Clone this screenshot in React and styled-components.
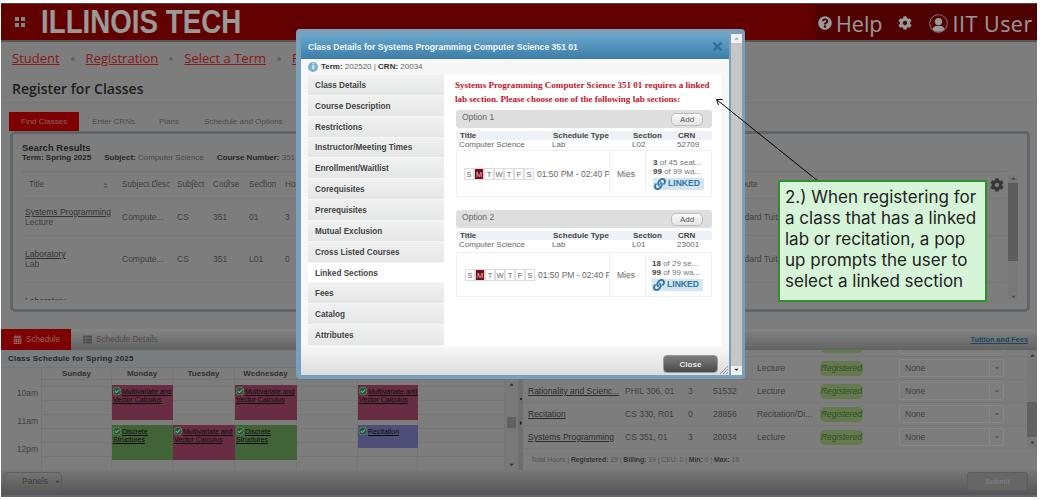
import React from 'react'
import styled, { createGlobalStyle } from 'styled-components'
import { FaQuestionCircle, FaCog, FaLink, FaCalendarAlt, FaThList, FaTimes, FaCheckCircle, FaCaretDown, FaCaretUp, FaCaretRight, FaSort } from 'react-icons/fa'

const Global = createGlobalStyle`
  html, body { margin: 0; background: #fff; overflow: hidden; }
  body { font-family: "Liberation Sans", Arial, sans-serif; }
`

/* Page under the dimmer: colours are lighter than they look, the veil darkens them */
const Screen = styled.div`
  position: relative;
  width: 1036px;
  height: 494px;
  margin: 3px 3px 3px 1px;
  display: flex;
  flex-direction: column;
  background: #d1d1d1;
  overflow: hidden;
`
const Veil = styled.div`
  position: absolute;
  inset: 0;
  background: rgba(0, 0, 0, 0.4);
`

const Header = styled.header`
  flex: none;
  height: 36px;
  display: flex;
  align-items: center;
  background: #a40000;
  border-bottom: 2px solid #8e8e8e;
  border-top: 1px solid #777;
`
const Grip = styled.div`
  display: grid;
  grid-template-columns: 4px 4px;
  gap: 2px;
  margin: 0 16px 0 14px;
  span { width: 4px; height: 4px; background: #ddd; }
`
const Logo = styled.div`
  font-weight: 700;
  font-size: 33px;
  line-height: 36px;
  color: #fff;
  flex: 1;
  white-space: nowrap;
  transform: scaleX(0.84);
  transform-origin: left center;
`
const HeaderRight = styled.div`
  width: 222px;
  height: 100%;
  display: flex;
  align-items: center;
  background: #840000;
  padding: 2px 0 0 3px;
  box-sizing: border-box;
  color: #fff;
  font-family: "Open Sans", sans-serif;
  font-size: 21.5px;
  white-space: nowrap;
`
const HelpText = styled.span`
  margin: 0 15px 0 4px;
`
const UserName = styled.span`
  letter-spacing: 0.5px;
`
const UserIcon = styled.svg`
  width: 19px;
  height: 19px;
  margin: 0 5px 0 17px;
`

const Crumbs = styled.nav`
  flex: none;
  height: 30px;
  display: flex;
  align-items: center;
  padding: 2px 0 0 11px;
  box-sizing: border-box;
  font-family: "Open Sans", sans-serif;
  font-size: 13px;
  white-space: nowrap;
  a { color: #e62a2a; text-decoration: underline; }
`
const CrumbDot = styled.i`
  width: 4px;
  height: 4px;
  border-radius: 50%;
  background: #a5a5a5;
  margin: 2px 11px 0 11px;
`
const PageTitle = styled.h1`
  flex: none;
  height: 31px;
  margin: 0;
  padding-left: 11px;
  font-family: "Open Sans", sans-serif;
  font-size: 14px;
  font-weight: 600;
  line-height: 33px;
  color: #333;
  border-bottom: 1px solid #c4c4c4;
  box-sizing: border-box;
`
const TabRow = styled.div`
  flex: none;
  height: 19px;
  margin-top: 9px;
  padding-left: 8px;
  display: flex;
  font-size: 8px;
  color: #7d7d7d;
`
const Tab = styled.div`
  height: 19px;
  line-height: 20px;
  padding: 0 12px;
  background: ${p => (p.$active ? '#d20000' : 'transparent')};
  color: ${p => (p.$active ? '#e9a0a0' : 'inherit')};
  margin-left: ${p => p.$gap || 0}px;
`

const Panel = styled.section`
  flex: none;
  width: 1020px;
  height: 181px;
  margin-left: 9px;
  border: 3px solid #a0a9b0;
  border-radius: 5px;
  padding: 8px 0 0 9px;
  box-sizing: border-box;
  position: relative;
`
const PanelTitle = styled.div`
  font-size: 9.5px;
  font-weight: 700;
  line-height: 11px;
  color: #3a3a3a;
`
const SearchInfo = styled.div`
  font-size: 8px;
  line-height: 10px;
  color: #7a7a7a;
  white-space: nowrap;
  b { color: #3f3f3f; }
  span { margin-right: 13px; }
`
const ResultTable = styled.div`
  margin-top: 8px;
  width: 985px;
  height: 128px;
  overflow: hidden;
  border-top: 1px solid #bdbdbd;
`
const ResultRow = styled.div`
  display: grid;
  grid-template-columns: 93px 55px 36px 36px 36px 442px 1fr;
  height: ${p => p.$h}px;
  border-bottom: 1px solid #c5c5c5;
  font-size: 8.5px;
  color: #6b6b6b;
`
const ResultCell = styled.div`
  display: flex;
  flex-direction: column;
  justify-content: center;
  padding-left: ${p => (p.$title ? 3 : 7)}px;
  line-height: 10px;
  white-space: nowrap;
  overflow: hidden;
  position: relative;
  a { color: #555; text-decoration: underline; }
`
const HeadCell = styled(ResultCell)`
  flex-direction: row;
  justify-content: flex-start;
  align-items: center;
  font-size: 8.2px;
  svg { color: #999; font-size: 7px; margin-left: ${p => p.$sortGap || 0}px; }
  &::after {
    content: '';
    display: ${p => (p.$caret ? 'block' : 'none')};
    position: absolute;
    left: ${p => p.$caret}px;
    top: 8px;
    width: 3px;
    height: 3px;
    border-left: 1px solid #999;
    border-top: 1px solid #999;
    transform: rotate(45deg);
  }
`
const ToolsCell = styled(HeadCell)`
  justify-content: space-between;
  padding-right: 3px;
  svg { color: #5c5c5c; font-size: 14px; margin: 0; }
`
const PanelScroll = styled.div`
  position: absolute;
  right: 9px;
  top: 41px;
  width: 10px;
  height: 125px;
  background: #c9c9c9;
  display: flex;
  flex-direction: column;
  align-items: center;
  justify-content: space-between;
  font-size: 7px;
  color: #777;
  &::before {
    content: '';
    position: absolute;
    top: 8px;
    left: 0;
    width: 10px;
    height: 78px;
    background: #9c9c9c;
  }
`

const Lower = styled.div`
  flex: none;
  margin-top: 17px;
  display: flex;
  flex-direction: column;
  height: 168px;
`
const LowerTabs = styled.div`
  flex: none;
  height: 21px;
  display: flex;
  align-items: stretch;
  background: linear-gradient(#dcdcdc, #a4a4a4);
  font-size: 8.2px;
  color: #808080;
`
const LowerTab = styled.div`
  display: flex;
  align-items: center;
  gap: 4px;
  width: ${p => (p.$active ? '70px' : 'auto')};
  box-sizing: border-box;
  padding: 0 12px;
  white-space: nowrap;
  background: ${p => (p.$active ? '#d20000' : 'transparent')};
  color: ${p => (p.$active ? '#f0a0a0' : 'inherit')};
  svg { font-size: 9px; flex: none; }
`
const FeesLink = styled.a`
  margin-left: auto;
  margin-right: 9px;
  align-self: center;
  font-size: 7.3px;
  font-weight: 700;
  color: #33789f;
  text-decoration: underline;
`
const LowerBody = styled.div`
  flex: none;
  height: 120px;
  display: flex;
  overflow: hidden;
`
const Calendar = styled.div`
  width: 517px;
  flex: none;
  display: flex;
  flex-direction: column;
`
const CalendarCaption = styled.div`
  flex: none;
  height: 17px;
  line-height: 17px;
  padding-left: 7px;
  font-size: 8px;
  font-weight: 700;
  color: #444;
  background: #c7d0d5;
  letter-spacing: 0.2px;
`
const CalendarGrid = styled.div`
  flex: 1;
  display: flex;
  position: relative;
  min-height: 0;
`
const TimeColumn = styled.div`
  width: 41px;
  flex: none;
  padding-top: 18px;
  border-right: 1px solid #c3c3c3;
  border-top: 1px solid #c3c3c3;
  box-sizing: border-box;
`
const TimeLabel = styled.div`
  height: 14px;
  line-height: 14px;
  margin-bottom: 14px;
  padding-right: 3px;
  font-size: 8.5px;
  text-align: right;
  color: #6e6e6e;
`
const DayColumn = styled.div`
  width: ${p => p.$w}px;
  flex: none;
  border-right: 1px solid #c3c3c3;
  box-sizing: border-box;
  display: flex;
  flex-direction: column;
`
const DayName = styled.div`
  flex: none;
  height: 11px;
  line-height: 11px;
  text-align: center;
  font-size: 8px;
  font-weight: 700;
  color: #555;
  border-top: 1px solid #c3c3c3;
`
const DayBody = styled.div`
  flex: 1;
  position: relative;
  border-top: 1px solid #c3c3c3;
  background: repeating-linear-gradient(transparent 0 13px, #c3c3c3 13px 14px) 0 -7px;
  background-size: 100% 14px;
`
const Event = styled.div`
  position: absolute;
  left: 0;
  right: -1px;
  top: ${p => p.$top}px;
  height: ${p => p.$h}px;
  background: ${p => p.$color};
  font-size: 7px;
  line-height: 7.5px;
  padding: 2px 0 2px 1px;
  box-sizing: border-box;
  color: #111;
  text-decoration: underline;
  svg { color: #2f9d57; background: #fff; border-radius: 50%; font-size: 8px; vertical-align: -1px; margin-right: 1px; }
`
const CalendarScroll = styled.div`
  width: 13px;
  flex: none;
  background: #c9c9c9;
  display: flex;
  flex-direction: column;
  align-items: center;
  justify-content: space-between;
  position: relative;
  font-size: 7px;
  color: #555;
  padding: 14px 0 2px;
  box-sizing: border-box;
  &::before {
    content: '';
    position: absolute;
    top: 50px;
    left: 2px;
    width: 9px;
    height: 11px;
    background: #a2a2a2;
  }
`
const Splitter = styled.div`
  width: 5px;
  flex: none;
  background: #b9b9b9;
  display: flex;
  flex-direction: column;
  align-items: center;
  font-size: 6px;
  color: #333;
  padding-top: 48px;
  gap: 20px;
  box-sizing: border-box;
`
const SplitDot = styled.i`
  width: 2px;
  height: 2px;
  background: #222;
  border-radius: 50%;
`
const Registered = styled.div`
  flex: 1;
  min-width: 0;
  display: flex;
  flex-direction: column;
  position: relative;
`
const RegList = styled.div`
  height: 99px;
  flex: none;
  overflow: hidden;
`
const RegRows = styled.div`
  margin-top: -16px;
`
const RegRow = styled.div`
  display: grid;
  grid-template-columns: 97px 63px 26px 44px 63px 79px 1fr;
  height: 23px;
  align-items: center;
  border-bottom: 1px solid #c6c6c6;
  box-sizing: border-box;
  font-size: 8.5px;
  color: #6a6a6a;
  margin-right: 10px;
  white-space: nowrap;
`
const RegCell = styled.div`
  padding-left: ${p => p.$pad ?? 4}px;
  a { color: #4d4d4d; text-decoration: underline; }
`
const Pill = styled.span`
  display: inline-block;
  width: 43px;
  height: 15px;
  line-height: 15px;
  text-align: center;
  border-radius: 5px;
  background: #a6cc84;
  color: #587f38;
  font-style: italic;
  font-size: 8.5px;
`
const SelectBox = styled.div`
  width: 105px;
  height: 18px;
  margin-left: 4px;
  display: flex;
  align-items: center;
  border: 1px solid #e2e2e2;
  border-radius: 2px;
  box-sizing: border-box;
  padding-left: 5px;
  font-size: 8.5px;
  color: #6a6a6a;
  span { flex: 1; }
  div {
    width: 13px;
    height: 100%;
    border-left: 1px solid #e2e2e2;
    display: flex;
    align-items: center;
    justify-content: center;
    font-size: 6px;
    color: #888;
  }
`
const Totals = styled.div`
  height: 21px;
  line-height: 21px;
  padding-left: 8px;
  font-size: 6.8px;
  color: #888;
  border-bottom: 1px solid #c6c6c6;
  b { color: #555; }
`
const RegScroll = styled(CalendarScroll)`
  position: absolute;
  top: 0;
  right: 0;
  width: 10px;
  height: 99px;
  padding: 2px 0 3px;
  &::before { top: 52px; left: 0; width: 10px; height: 35px; }
`
const BottomBar = styled.footer`
  flex: none;
  height: 27px;
  box-sizing: border-box;
  display: flex;
  align-items: center;
  justify-content: space-between;
  padding: 0 9px 3px 3px;
  background: linear-gradient(#c8c8c8, #8e8e8e);
  border-bottom: 2px solid #a5a5c5;
`
const PanelsButton = styled.button`
  width: 58px;
  height: 19px;
  display: flex;
  align-items: center;
  gap: 6px;
  padding: 0 0 0 17px;
  background: transparent;
  border: 1px solid #9b9b9b;
  border-radius: 4px;
  font: 8.5px "Liberation Sans", sans-serif;
  color: #666;
`
const SubmitButton = styled.button`
  width: 61px;
  height: 19px;
  background: #ababab;
  border: 1px solid #9a9a9a;
  border-radius: 3px;
  font: bold 7.5px "Liberation Sans", sans-serif;
  color: #cfcfcf;
`

/* dialog */
const Modal = styled.div`
  position: absolute;
  left: 295px;
  top: 26px;
  width: 449px;
  height: 350px;
  padding: 5px 3px 4px 5px;
  box-sizing: border-box;
  background: #7aa0bb;
  border-radius: 4px;
  display: flex;
  gap: 2px;
`
const ModalMain = styled.div`
  flex: 1;
  display: flex;
  flex-direction: column;
  min-width: 0;
  background: #f7f7f7;
`
const ModalTitle = styled.div`
  height: 25px;
  flex: none;
  display: flex;
  align-items: center;
  justify-content: space-between;
  padding: 0 5px 0 7px;
  background: linear-gradient(#6aa6cd, #3c7ea9);
  color: #f2f6f9;
  font-size: 8.6px;
  font-weight: 700;
  svg { color: #2f6f9c; font-size: 13px; }
`
const TermRow = styled.div`
  height: 16px;
  flex: none;
  display: flex;
  align-items: center;
  padding: 0 0 1px 7px;
  box-sizing: border-box;
  gap: 3px;
  font-size: 8px;
  color: #666;
  b { color: #333; }
`
const InfoIcon = styled.span`
  width: 10px;
  height: 10px;
  border-radius: 50%;
  background: #79b4cc;
  color: #fff;
  font: bold 8px/10px "Liberation Serif", serif;
  text-align: center;
`
const ModalColumns = styled.div`
  flex: none;
  height: 271px;
  margin: 0 7px;
  display: flex;
`
const SideMenu = styled.div`
  width: 136px;
  flex: none;
  display: flex;
  flex-direction: column;
`
const SideItem = styled.div`
  flex: 1;
  display: flex;
  align-items: center;
  padding: 1px 0 0 7px;
  font-size: 8.2px;
  font-weight: 700;
  color: #444;
  border-bottom: 1px solid #f6f6f6;
  background: ${p => (p.$active ? '#fff' : 'linear-gradient(#f1f1f1, #e5e6e6)')};
`
const ModalContent = styled.div`
  flex: 1;
  min-width: 0;
  background: #fff;
  padding: 3px 10px 0 11px;
`
const Note = styled.p`
  margin: 0 0 4px;
  font-family: "Liberation Serif", serif;
  font-size: 9.05px;
  font-weight: 700;
  line-height: 14px;
  color: #c3131f;
  white-space: nowrap;
`
const Option = styled.div`
  margin: 0 0 13px 1px;
  width: 256px;
`
const OptionHead = styled.div`
  height: 18px;
  display: flex;
  justify-content: space-between;
  padding: 2px 9px 0 6px;
  box-sizing: border-box;
  background: #dedede;
  border-radius: 3px;
  font-size: 8.5px;
  color: #666;
`
const AddButton = styled.button`
  width: 32px;
  height: 13px;
  margin-top: 1px;
  padding: 0;
  background: linear-gradient(#fafafa, #e4e4e4);
  border: 1px solid #bdbdbd;
  border-radius: 5px;
  font: 8px "Liberation Sans", sans-serif;
  color: #555;
`
const SectionGrid = styled.div`
  display: grid;
  grid-template-columns: 93px 80px 45px 1fr;
  height: 9px;
  line-height: 9px;
  font-size: 8px;
  white-space: nowrap;
  padding-left: ${p => (p.$head ? 4 : 3)}px;
  margin-top: ${p => (p.$head ? 3 : 0)}px;
  color: ${p => (p.$head ? '#444' : '#666')};
  font-weight: ${p => (p.$head ? 700 : 400)};
  background: ${p => (p.$head ? '#eef2f7' : 'transparent')};
`
const Meeting = styled.div`
  display: grid;
  grid-template-columns: 153px 36px 1fr;
  height: ${p => (p.$compact ? 45 : 47)}px;
  margin-top: ${p => (p.$compact ? 3 : 1)}px;
  border: 1px solid #f0f0f0;
  box-sizing: border-box;
  font-size: 8.5px;
  color: #666;
`
const MeetingCell = styled.div`
  display: flex;
  align-items: center;
  padding-left: ${p => p.$pad}px;
  border-right: ${p => (p.$last ? 0 : '1px solid #f0f0f0')};
  white-space: nowrap;
  overflow: hidden;
`
const DayBoxes = styled.div`
  display: flex;
  flex: none;
  margin-right: 3px;
`
const DayBox = styled.span`
  width: 10px;
  height: 12px;
  line-height: 11px;
  text-align: center;
  font-size: 7.5px;
  box-sizing: border-box;
  border: 1px solid #ddd;
  background: ${p => (p.$active ? '#7a0d14' : '#fff')};
  color: ${p => (p.$active ? '#e9c9c9' : '#666')};
`
const Seats = styled.div`
  display: flex;
  flex-direction: column;
  font-size: 8px;
  line-height: 9px;
  color: #777;
  b { color: #444; }
`
const LinkedTag = styled.div`
  width: 51px;
  height: 12px;
  margin-top: 2px;
  display: flex;
  align-items: center;
  gap: 2px;
  padding-left: 1px;
  box-sizing: border-box;
  background: #d3e6f0;
  color: #2f74a6;
  font-size: 8.6px;
  font-weight: 700;
  svg { font-size: 12px; flex: none; }
`
const ModalFooter = styled.div`
  flex: 1;
  display: flex;
  align-items: flex-start;
  justify-content: flex-end;
  padding: 9px 11px 0 0;
  position: relative;
  background: linear-gradient(#f8f8f8, #dcdcdc);
`
const CloseButton = styled.button`
  width: 55px;
  height: 18px;
  padding: 0;
  background: linear-gradient(#7d7d7d, #4a4a4a);
  border: 1px solid #999;
  border-radius: 4px;
  color: #e8e8e8;
  font: bold 8px "Liberation Sans", sans-serif;
`
const ResizeGrip = styled.svg`
  position: absolute;
  right: 1px;
  bottom: 1px;
  width: 8px;
  height: 8px;
`
const ModalScroll = styled.div`
  width: 11px;
  flex: none;
  background: #c6c6c6;
  border-top: 9px solid #f0f0f0;
  border-bottom: 9px solid #f0f0f0;
  position: relative;
`
const ScrollArrow = styled.span`
  position: absolute;
  left: 2px;
  font-size: 7px;
  line-height: 7px;
  color: ${p => (p.$down ? '#333' : '#aaa')};
  ${p => (p.$down ? 'bottom: -8px;' : 'top: -8px;')}
`

/* annotation laid over the dialog */
const Callout = styled.div`
  position: absolute;
  left: 777px;
  top: 177px;
  width: 209px;
  height: 122px;
  padding: 5px 0 0 5px;
  box-sizing: border-box;
  background: #d6f5d8;
  border: 2px solid #2e8f2e;
  font-family: Inter, sans-serif;
  font-size: 17px;
  line-height: 21px;
  color: #222;
  white-space: pre;
`
const Arrow = styled.svg`
  position: absolute;
  left: 700px;
  top: 85px;
  width: 130px;
  height: 100px;
`

const days = ['S', 'M', 'T', 'W', 'T', 'F', 'S']
const pink = '#ad4c6e'
const green = '#6ea55c'

const MeetingRow = ({ compact, seats, wait, pad }) => (
  <Meeting $compact={compact}>
    <MeetingCell $pad={compact ? 8 : 7}>
      <DayBoxes>
        {days.map((d, i) => (
          <DayBox key={i} $active={i === 1}>{d}</DayBox>
        ))}
      </DayBoxes>
      01:50 PM - 02:40 PM
    </MeetingCell>
    <MeetingCell $pad={7}>Mies</MeetingCell>
    <MeetingCell $pad={pad} $last>
      <Seats>
        <span><b>{seats[0]}</b>{seats[1]}</span>
        <span><b>99</b>{wait}</span>
        <LinkedTag><FaLink />LINKED</LinkedTag>
      </Seats>
    </MeetingCell>
  </Meeting>
)

const OptionBlock = ({ name, section, crn, children }) => (
  <Option>
    <OptionHead>{name}<AddButton>Add</AddButton></OptionHead>
    <SectionGrid $head><span>Title</span><span>Schedule Type</span><span>Section</span><span>CRN</span></SectionGrid>
    <SectionGrid><span>Computer Science</span><span>Lab</span><span>{section}</span><span>{crn}</span></SectionGrid>
    {children}
  </Option>
)

const sideItems = ['Class Details', 'Course Description', 'Restrictions', 'Instructor/Meeting Times', 'Enrollment/Waitlist', 'Corequisites', 'Prerequisites', 'Mutual Exclusion', 'Cross Listed Courses', 'Linked Sections', 'Fees', 'Catalog', 'Attributes']

const regRows = [
  ['', '', '', '', 'Lecture'],
  ['', '', '', '', 'Lecture'],
  ['Rationality and Scienc...', 'PHIL 306, 01', '3', '51532', 'Lecture'],
  ['Recitation', 'CS 330, R01', '0', '28856', 'Recitation/Di...'],
  ['Systems Programming', 'CS 351, 01', '3', '20034', 'Lecture'],
]

const calendarDays = [
  { name: 'Sunday', w: 70, events: [] },
  { name: 'Monday', w: 61, events: [
    { top: 5, h: 35, color: pink, text: 'Multivariate and Vector Calculus' },
    { top: 45, h: 35, color: green, text: 'Discrete Structures' },
  ] },
  { name: 'Tuesday', w: 62, events: [{ top: 45, h: 35, color: pink, text: 'Multivariate and Vector Calculus' }] },
  { name: 'Wednesday', w: 62, events: [
    { top: 5, h: 35, color: pink, text: 'Multivariate and Vector Calculus' },
    { top: 45, h: 35, color: green, text: 'Discrete Structures' },
  ] },
  { name: 'Thursday', w: 61, events: [] },
  { name: 'Friday', w: 60, events: [
    { top: 5, h: 35, color: pink, text: 'Multivariate and Vector Calculus' },
    { top: 45, h: 23, color: '#8084c8', text: 'Recitation' },
  ] },
  { name: 'Saturday', w: 87, events: [] },
]

const App = () => (
  <>
    <Global />
    <Screen>
      <Header>
        <Grip><span /><span /><span /><span /></Grip>
        <Logo>ILLINOIS TECH</Logo>
        <HeaderRight>
          <FaQuestionCircle size={14} />
          <HelpText>Help</HelpText>
          <FaCog size={14} />
          <UserIcon viewBox="0 0 20 20">
            <circle cx="10" cy="10" r="9.3" fill="none" stroke="#fff" strokeWidth="0.8" />
            <circle cx="10" cy="8" r="3.8" fill="#fff" />
            <path d="M3.5 16c1-3 4-3.6 6.5-3.6s5.5.6 6.5 3.6a9 9 0 0 1-13 0z" fill="#fff" />
          </UserIcon>
          <UserName>IIT User</UserName>
        </HeaderRight>
      </Header>

      <Crumbs>
        <a>Student</a><CrumbDot />
        <a>Registration</a><CrumbDot />
        <a>Select a Term</a><CrumbDot />
        <a>Register for Classes</a>
      </Crumbs>
      <PageTitle>Register for Classes</PageTitle>

      <TabRow>
        <Tab $active>Find Classes</Tab>
        <Tab $gap={1}>Enter CRNs</Tab>
        <Tab>Plans</Tab>
        <Tab $gap={1}>Schedule and Options</Tab>
      </TabRow>

      <Panel>
        <PanelTitle>Search Results</PanelTitle>
        <SearchInfo>
          <span><b>Term: Spring 2025</b></span>
          <span><b>Subject:</b> Computer Science</span>
          <span><b>Course Number:</b> 351</span>
        </SearchInfo>
        <ResultTable>
          <ResultRow $h={26}>
            <HeadCell $sortGap={58}>Title<FaSort /></HeadCell>
            <HeadCell $caret={39}>Subject Desc</HeadCell>
            <HeadCell $caret={22}>Subject</HeadCell>
            <HeadCell $caret={20}>Course</HeadCell>
            <HeadCell $caret={20}>Section</HeadCell>
            <HeadCell>Hours</HeadCell>
            <ToolsCell>Attribute<FaCog /></ToolsCell>
          </ResultRow>
          <ResultRow $h={36}>
            <ResultCell $title><a>Systems Programming</a>Lecture</ResultCell>
            <ResultCell>Compute...</ResultCell>
            <ResultCell>CS</ResultCell>
            <ResultCell>351</ResultCell>
            <ResultCell>01</ResultCell>
            <ResultCell>3</ResultCell>
            <ResultCell>Standard Tuition</ResultCell>
          </ResultRow>
          <ResultRow $h={46}>
            <ResultCell $title><a>Laboratory</a>Lab</ResultCell>
            <ResultCell>Compute...</ResultCell>
            <ResultCell>CS</ResultCell>
            <ResultCell>351</ResultCell>
            <ResultCell>L01</ResultCell>
            <ResultCell>0</ResultCell>
            <ResultCell>Standard Tuition</ResultCell>
          </ResultRow>
          <ResultRow $h={46}>
            <ResultCell $title><a>Laboratory</a>Lab</ResultCell>
            <ResultCell>Compute...</ResultCell>
            <ResultCell>CS</ResultCell>
            <ResultCell>351</ResultCell>
            <ResultCell>L02</ResultCell>
            <ResultCell>0</ResultCell>
            <ResultCell>Standard Tuition</ResultCell>
          </ResultRow>
        </ResultTable>
        <PanelScroll><FaCaretUp /><FaCaretDown /></PanelScroll>
      </Panel>

      <Lower>
        <LowerTabs>
          <LowerTab $active><FaCalendarAlt />Schedule</LowerTab>
          <LowerTab><FaThList />Schedule Details</LowerTab>
          <FeesLink>Tuition and Fees</FeesLink>
        </LowerTabs>
        <LowerBody>
          <Calendar>
            <CalendarCaption>Class Schedule for Spring 2025</CalendarCaption>
            <CalendarGrid>
              <TimeColumn>
                <TimeLabel>10am</TimeLabel>
                <TimeLabel>11am</TimeLabel>
                <TimeLabel>12pm</TimeLabel>
              </TimeColumn>
              {calendarDays.map(day => (
                <DayColumn key={day.name} $w={day.w}>
                  <DayName>{day.name}</DayName>
                  <DayBody>
                    {day.events.map(ev => (
                      <Event key={ev.top} $top={ev.top} $h={ev.h} $color={ev.color}>
                        <FaCheckCircle />{ev.text}
                      </Event>
                    ))}
                  </DayBody>
                </DayColumn>
              ))}
              <CalendarScroll><FaCaretUp /><FaCaretDown /></CalendarScroll>
            </CalendarGrid>
          </Calendar>
          <Splitter><SplitDot /><FaCaretRight /></Splitter>
          <Registered>
            <RegList>
              <RegRows>
                {regRows.map((r, i) => (
                  <RegRow key={i}>
                    <RegCell $pad={5}><a>{r[0]}</a></RegCell>
                    <RegCell $pad={5}>{r[1]}</RegCell>
                    <RegCell $pad={5}>{r[2]}</RegCell>
                    <RegCell>{r[3]}</RegCell>
                    <RegCell>{r[4]}</RegCell>
                    <RegCell><Pill>Registered</Pill></RegCell>
                    <RegCell $pad={0}>
                      <SelectBox><span>None</span><div><FaCaretDown /></div></SelectBox>
                    </RegCell>
                  </RegRow>
                ))}
              </RegRows>
            </RegList>
            <RegScroll><FaCaretUp /><FaCaretDown /></RegScroll>
            <Totals>
              Total Hours | <b>Registered:</b> 19 | <b>Billing:</b> 19 | CEU: 0 | <b>Min:</b> 0 | <b>Max:</b> 19
            </Totals>
          </Registered>
        </LowerBody>
        <BottomBar>
          <PanelsButton>Panels <FaCaretDown size={7} /></PanelsButton>
          <SubmitButton>Submit</SubmitButton>
        </BottomBar>
      </Lower>

      <Veil />

      <Modal>
        <ModalMain>
          <ModalTitle>
            Class Details for Systems Programming Computer Science 351 01
            <FaTimes />
          </ModalTitle>
          <TermRow>
            <InfoIcon>i</InfoIcon>
            <span><b>Term:</b> 202520 | <b>CRN:</b> 20034</span>
          </TermRow>
          <ModalColumns>
            <SideMenu>
              {sideItems.map(item => (
                <SideItem key={item} $active={item === 'Linked Sections'}>{item}</SideItem>
              ))}
            </SideMenu>
            <ModalContent>
              <Note>
                Systems Programming Computer Science 351 01 requires a linked<br />
                lab section. Please choose one of the following lab sections:
              </Note>
              <OptionBlock name="Option 1" section="L02" crn="52709">
                <MeetingRow seats={['3', ' of 45 seat...']} wait=" of 99 wa..." pad={7} />
              </OptionBlock>
              <OptionBlock name="Option 2" section="L01" crn="23001">
                <MeetingRow compact seats={['18', ' of 29 se...']} wait=" of 99 wa..." pad={6} />
              </OptionBlock>
            </ModalContent>
          </ModalColumns>
          <ModalFooter>
            <CloseButton>Close</CloseButton>
            <ResizeGrip viewBox="0 0 8 8">
              <path d="M8 0L0 8M8 3L3 8M8 6L6 8" stroke="#888" strokeWidth="0.8" />
            </ResizeGrip>
          </ModalFooter>
        </ModalMain>
        <ModalScroll>
          <ScrollArrow><FaCaretUp /></ScrollArrow>
          <ScrollArrow $down><FaCaretDown /></ScrollArrow>
        </ModalScroll>
      </Modal>

      <Arrow viewBox="0 0 130 100">
        <path d="M117 93L15.500 11.500" stroke="#000" strokeWidth="1" fill="none" />
        <path d="M21.500 11.500L15.500 11.500L17.500 17" stroke="#000" strokeWidth="1" fill="none" />
      </Arrow>
      <Callout>{`2.) When registering for
a class that has a linked
lab or recitation, a pop
up prompts the user to
select a linked section`}</Callout>
    </Screen>
  </>
)

export default App
